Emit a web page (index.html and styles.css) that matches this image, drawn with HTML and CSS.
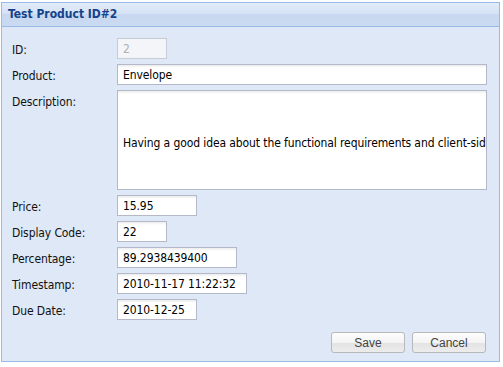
FILE: index.html
```html
<!DOCTYPE html>
<html lang="en">
<head>
  <meta charset="UTF-8" />
  <title>Test Product ID#2</title>
  <link rel="stylesheet" href="styles.css">
</head>
<body>
  <div class="panel">
    <div class="panel-header">Test Product ID#2</div>
    <form class="panel-body">
      <div class="fields">
        <label class="field-label">ID:</label>
        <input class="field id-field" type="text" value="2" disabled />

        <label class="field-label">Product:</label>
        <input class="field wide" type="text" value="Envelope" />

        <label class="field-label">Description:</label>
        <textarea class="field wide desc" wrap="off">



Having a good idea about the functional requirements and client-side development</textarea>

        <label class="field-label">Price:</label>
        <input class="field w80" type="text" value="15.95" />

        <label class="field-label">Display Code:</label>
        <input class="field w50" type="text" value="22" />

        <label class="field-label">Percentage:</label>
        <input class="field w120" type="text" value="89.2938439400" />

        <label class="field-label">Timestamp:</label>
        <input class="field w130" type="text" value="2010-11-17 11:22:32" />

        <label class="field-label">Due Date:</label>
        <input class="field w80" type="text" value="2010-12-25" />
      </div>

      <div class="buttons">
        <button type="button" class="btn">Save</button>
        <button type="button" class="btn">Cancel</button>
      </div>
    </form>
  </div>
</body>
</html>
```

FILE: styles.css
```css
body {
  margin: 0;
  padding: 2px 0 0 1px;
  background: #fff;
  font-family: "DejaVu Sans Condensed", "DejaVu Sans", sans-serif;
  font-size: 12px;
}

.panel {
  width: 497px;
  height: 358px;
  border: 1px solid #99bbe8;
  display: flex;
  flex-direction: column;
  background: #dfe8f6;
}

.panel-header {
  height: 23px;
  line-height: 22px;
  padding-left: 6px;
  font-weight: bold;
  font-size: 12px;
  color: #15428b;
  border-bottom: 1px solid #99bbe8;
  background: linear-gradient(#e2ecf9 0%, #d6e3f5 45%, #c7d8f0 50%, #cadaf1 100%);
}

.panel-body {
  flex: 1;
  display: flex;
  flex-direction: column;
  justify-content: space-between;
  padding: 11px 13px 8px 10px;
  margin: 0;
}

.fields {
  display: grid;
  grid-template-columns: 105px 1fr;
  row-gap: 5px;
  align-items: start;
  letter-spacing: -0.1px;
}

.field-label {
  padding-top: 5px;
  color: #111;
  line-height: 15px;
}

.field {
  box-sizing: border-box;
  height: 21px;
  margin: 0;
  padding: 1px 5px;
  border: 1px solid #b5b8c8;
  background: #fff linear-gradient(#ececec, #fff 3px);
  font: inherit;
  letter-spacing: inherit;
  color: #000;
  outline: none;
}

.id-field {
  width: 50px;
  color: #b0b0b0;
  background: #f3f5f9;
  border-color: #c6ccd6;
}

.wide { width: 370px; }
.w50 { width: 50px; }
.w80 { width: 80px; }
.w120 { width: 120px; }
.w130 { width: 130px; }

.desc {
  height: 100px;
  resize: none;
  overflow: hidden;
  white-space: pre;
  line-height: 15px;
  padding-top: 0;
}

.buttons {
  display: flex;
  justify-content: flex-end;
  gap: 7px;
}

.btn {
  width: 74px;
  height: 21px;
  padding: 0;
  border: 1px solid #b8b8b8;
  border-radius: 3px;
  background: linear-gradient(#fdfdfd 0%, #f4f4f4 50%, #e3e3e3 51%, #ececec 100%);
  font-family: "Liberation Sans", Arial, sans-serif;
  font-size: 12px;
  color: #444;
}
```
